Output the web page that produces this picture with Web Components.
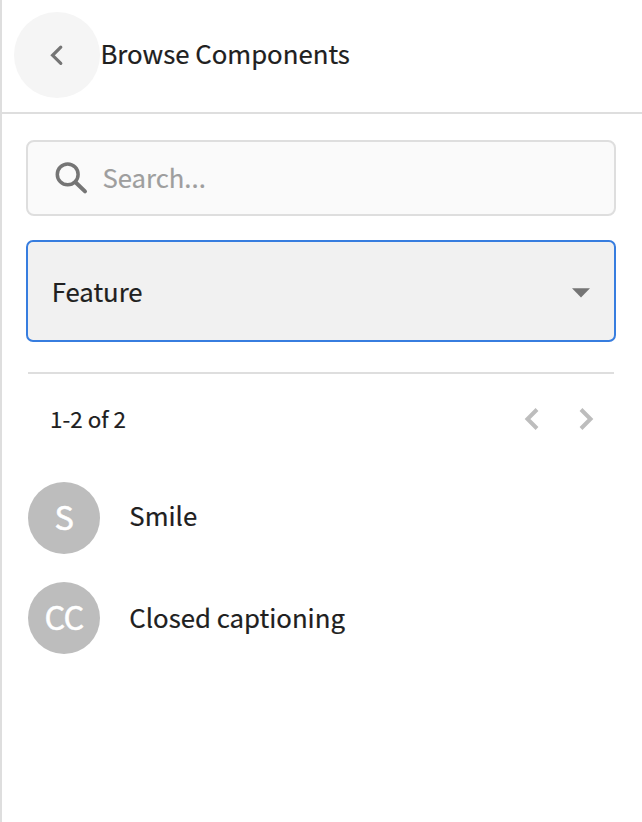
<!DOCTYPE html>
<html lang="en">
<head>
<meta charset="utf-8">
<title>Browse Components</title>
<style>
html,body{margin:0;height:100%;background:#fff}
body{font-family:"Noto Sans CJK SC","Noto Sans",sans-serif;color:#202020;-webkit-text-stroke:.2px;overflow:hidden}
</style>
</head>
<body>
<side-panel>
  <panel-header slot="header">Browse Components</panel-header>
  <search-field>Search...</search-field>
  <select-field>Feature</select-field>
  <page-nav>1-2 of 2</page-nav>
  <list-entry initials="S" style="--drop:-7px">Smile</list-entry>
  <list-entry initials="CC" style="--drop:-3px">Closed captioning</list-entry>
</side-panel>
<script>
function define(name, markup) {
  const template = document.createElement('template');
  template.innerHTML = '<style>*{box-sizing:border-box}svg{display:block;flex:none}:host{box-sizing:border-box}</style>' + markup;
  customElements.define(name, class extends HTMLElement {
    constructor() {
      super();
      this.attachShadow({mode: 'open'}).append(template.content.cloneNode(true));
    }
    connectedCallback() {
      const target = this.shadowRoot.querySelector('.initials');
      if (target) target.textContent = this.getAttribute('initials');
    }
  });
}
define('side-panel', `<style>
:host{display:block;height:822px;border-left:2px solid #dedede}
main{padding:26px 26px 0 24px}
</style><slot name="header"></slot><main><slot></slot></main>`);

define('panel-header', `<style>
:host{display:flex;align-items:center;height:114px;border-bottom:2px solid #dedede;margin-left:-2px;padding:0 0 2px 14px;font-size:25.75px;line-height:38px}
.back{width:86px;height:86px;border-radius:50%;background:#f5f5f5;display:flex;flex:none}
.title{white-space:nowrap;padding:0 0 4px .4px}
</style><div class="back"><svg width="86" height="86" viewBox="0 0 86 86"><path d="M46.8 35.2L38.6 43.3L46.8 51.4" fill="none" stroke="#757575" stroke-width="3.2" stroke-linecap="round"/></svg></div><span class="title"><slot></slot></span>`);

define('search-field', `<style>
:host{display:flex;align-items:center;height:76px;border:2px solid #dedede;border-radius:8px;background:#fafafa;padding-left:25px;font-size:25.7px;line-height:38px;color:#9e9e9e}
.label{margin-left:13.4px;padding-bottom:2px}
</style><svg width="36" height="36" viewBox="0 0 36 36" fill="none" stroke="#757575"><circle cx="14.7" cy="14.4" r="10.4" stroke-width="3.5"/><path d="M22.5 22.3L32 31.4" stroke-width="4" stroke-linecap="round"/></svg><span class="label"><slot></slot></span>`);

define('select-field', `<style>
:host{display:flex;align-items:center;justify-content:space-between;height:102px;margin-top:24px;border:2px solid #377ddf;border-radius:7px;background:#f1f1f1;padding:0 24px 0 23.7px;font-size:25.7px;line-height:38px}
svg{margin-top:4px}
</style><span><slot></slot></span><svg width="18" height="10" viewBox="0 0 18 10"><path d="M0 .2H18L9 9.5Z" fill="#757575"/></svg>`);

define('page-nav', `<style>
:host{display:flex;align-items:center;justify-content:space-between;margin:30px 2px 0;height:96px;border-top:2px solid #dedede;padding:0 18px 4px 22px;font-size:22.4px;line-height:34px}
.label{padding-bottom:2px}
.arrows{display:flex;gap:38px}
</style><span class="label"><slot></slot></span><div class="arrows"><svg width="18" height="24" viewBox="0 0 18 24"><path d="M15 2.5L5.5 12L15 21.5" fill="none" stroke="#bdbdbd" stroke-width="4"/></svg><svg width="18" height="24" viewBox="0 0 18 24"><path d="M3 2.5L12.5 12L3 21.5" fill="none" stroke="#bdbdbd" stroke-width="4"/></svg></div>`);

define('list-entry', `<style>
:host{display:flex;align-items:center;height:100px;padding-left:2px;font-size:25.75px;line-height:38px}
.initials{width:72px;height:72px;border-radius:50%;background:#bdbdbd;color:#fff;display:flex;align-items:center;justify-content:center;padding-bottom:5px;font-size:32.5px;letter-spacing:-.6px;line-height:48px;flex:none;-webkit-text-stroke:.5px}
.label{margin-left:29.3px;margin-top:var(--drop)}
</style><div class="initials"></div><span class="label"><slot></slot></span>`);
</script>
</body>
</html>
